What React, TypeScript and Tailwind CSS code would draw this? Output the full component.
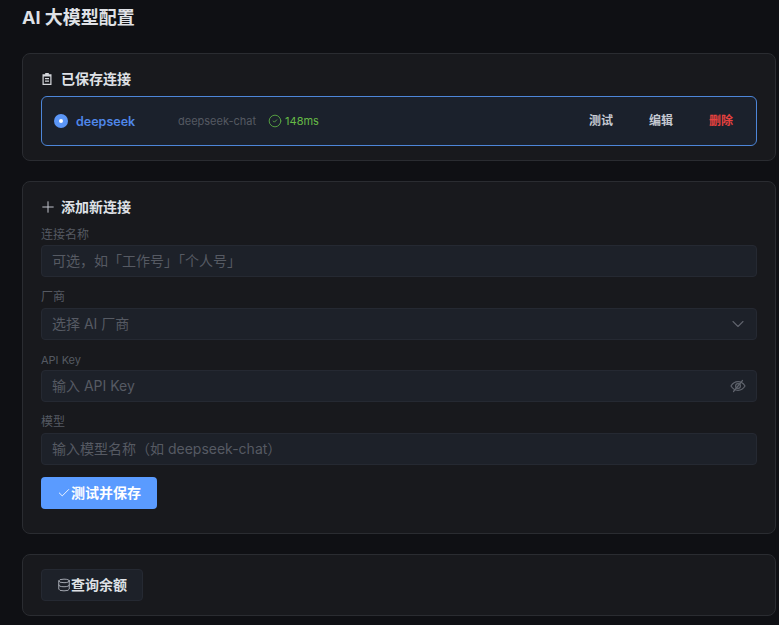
import { Check, ChevronDown, CircleCheck, Database, Plus } from 'lucide-react';
import type { ReactNode } from 'react';

function EyeSlash() {
  return (
    <svg viewBox="0 0 16 16" className="h-4 w-4 text-[#5f636c]" fill="none" stroke="currentColor" strokeWidth="1.2" strokeLinecap="round">
      <path d="M1 8c1.8-2.9 4.2-4.3 7-4.3s5.2 1.4 7 4.3c-1.8 2.9-4.2 4.3-7 4.3S2.800 10.900 1 8z" />
      <circle cx="8" cy="8" r="2.400" />
      <path d="M3.500 13.500 12.500 2.500" />
    </svg>
  );
}

const fields = [
  { label: '连接名称', labelSize: 'text-xs', placeholder: '可选\uFF0C如「工作号」「个人号」' },
  { label: '厂商', labelSize: 'text-xs', placeholder: '选择 AI 厂商', icon: <ChevronDown className="h-5 w-5 text-[#5f636c]" strokeWidth={1.3} /> },
  { label: 'API Key', labelSize: 'text-[11px]', placeholder: '输入 API Key', icon: <span className="mr-0.5"><EyeSlash /></span> },
  { label: '模型', labelSize: 'text-xs', placeholder: '输入模型名称\uFF08如 deepseek-chat\uFF09' },
];

function Card({ className, children }: { className: string; children: ReactNode }) {
  return <section className={`rounded-lg border border-[#2a2c31] bg-[#18191d] px-[18px] ${className}`}>{children}</section>;
}

function ClipIcon() {
  return (
    <svg viewBox="0 0 12 12" className="h-3 w-3 text-[#d5d7dc]" fill="currentColor">
      <path fillRule="evenodd" d="M4.200 0h3.600v1.300h2.700V12h-9V1.300h2.700V0zM2.700 3.400v7.400h6.600V3.400H2.700zM4 5h4v1.200H4V5zm0 2.500h4v1.200H4V7.500z" />
    </svg>
  );
}

export default function App() {
  return (
    <div className="h-[625px] overflow-hidden bg-[#0f1014] pl-[22px] pr-[3px] font-[Inter,'Noto_Sans_CJK_SC',sans-serif] text-[#dfe1e6]">
      <h1 className="h-[53px] pt-[5px] text-lg leading-[26px] font-bold">AI 大模型配置</h1>

      <Card className="h-[108px] pt-[15px]">
        <h2 className="flex h-5 items-center gap-2 text-sm font-semibold">
          <ClipIcon /> 已保存连接
        </h2>
        <div className="mt-[7px] flex h-[50px] items-center rounded-md border border-[#4d86d9] bg-[#1b212c] pl-3 pr-[23px]">
          <span className="flex h-3.5 w-3.5 items-center justify-center rounded-full bg-[#5b96f7]">
            <span className="h-1 w-1 rounded-full bg-white" />
          </span>
          <span className="ml-2 w-[102px] pt-0.5 text-[12.5px] font-semibold text-[#4f87ea]">deepseek</span>
          <span className="pt-px text-[11px] text-[#555962]">deepseek-chat</span>
          <CircleCheck className="ml-3 h-3.5 w-3.5 text-[#5cad44]" strokeWidth={1.5} />
          <span className="ml-[3px] pt-px text-[11px] text-[#66bb46]">148ms</span>
          <div className="ml-auto flex gap-9 text-xs font-semibold text-[#c5c9d2]">
            <span>测试</span>
            <span>编辑</span>
            <span className="text-[#e5413f]">删除</span>
          </div>
        </div>
      </Card>

      <Card className="mt-5 h-[353px] pt-[15px]">
        <h2 className="flex h-5 items-center gap-1 text-sm font-semibold">
          <Plus className="-ml-[2px] h-[18px] w-[18px] text-[#c5c9d2]" strokeWidth={1.3} /> 添加新连接
        </h2>
        <div className="mt-[9.500px] flex flex-col gap-3">
          {fields.map((field) => (
            <div key={field.label}>
              <label className={`block h-[18.5px] leading-4 text-[#555962] ${field.labelSize}`}>{field.label}</label>
              <div className="flex h-8 items-center rounded border border-[#252932] bg-[#1d2129] pl-[10px] pr-2">
                <input
                  readOnly
                  placeholder={field.placeholder}
                  className="min-w-0 flex-1 bg-transparent text-sm outline-none placeholder:text-[#565a63]"
                />
                {field.icon}
              </div>
            </div>
          ))}
        </div>
        <button className="mt-3 flex h-8 w-[116px] items-center justify-center rounded bg-[#5a9bff] text-sm font-semibold text-white">
          <Check className="h-3.5 w-3.5" strokeWidth={1.5} />
          测试并保存
        </button>
      </Card>

      <Card className="mt-5 h-[62px] pt-[14px]">
        <button className="flex h-8 w-[102px] items-center justify-center rounded border border-[#252932] bg-[#1d2129] text-sm font-semibold text-[#dfe1e6]">
          <Database className="h-3.5 w-3.5 text-[#b5b9c2]" strokeWidth={1.5} />
          查询余额
        </button>
      </Card>
    </div>
  );
}
